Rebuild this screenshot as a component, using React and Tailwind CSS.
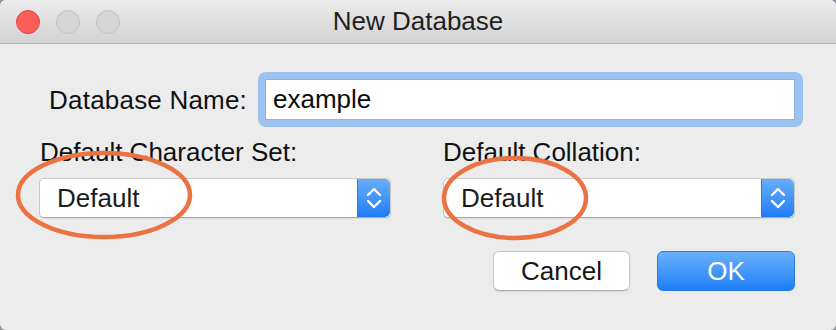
import React from 'react'

function Stepper() {
  return (
    <div className="w-[33px] h-full flex items-center justify-center rounded-r-[5px] bg-gradient-to-b from-[#67adfa] to-[#1c7cf5] border-l border-[#2c7fe6]">
      <svg width="16" height="24" viewBox="0 0 16 24" fill="none" stroke="white" strokeWidth="2.4" strokeLinecap="round" strokeLinejoin="round">
        <path d="M2 9 L8 3 L14 9" />
        <path d="M2 15 L8 21 L14 15" />
      </svg>
    </div>
  )
}

function Select({ value }) {
  return (
    <div className="h-[40px] flex items-stretch bg-white rounded-[5px] border border-[#c9c9c9] border-b-[#a9a9a9] shadow-[0_1px_1px_rgba(0,0,0,0.08)] overflow-hidden">
      <div className="flex-1 flex items-center pl-[17px] text-[26px] text-[#1c1c1c]">{value}</div>
      <Stepper />
    </div>
  )
}

export default function App() {
  return (
    <div className="w-[836px] h-[330px] bg-[#8d929b] font-['Liberation_Sans',Arial,sans-serif]">
      <div className="relative w-full h-full bg-[#ececec] rounded-[6px] overflow-hidden flex flex-col">
        {/* title bar */}
        <div className="h-[44px] shrink-0 grid grid-cols-[1fr_auto_1fr] items-center bg-gradient-to-b from-[#ebebeb] to-[#d3d3d3] border-b border-[#b2b2b2]">
          <div className="flex items-center gap-[16px] pl-[16px]">
            <span className="w-[24px] h-[24px] rounded-full bg-[#fc5f57] border border-[#e0443e]" />
            <span className="w-[24px] h-[24px] rounded-full bg-[#d5d5d5] border border-[#c2c2c2]" />
            <span className="w-[24px] h-[24px] rounded-full bg-[#d5d5d5] border border-[#c2c2c2]" />
          </div>
          <div className="text-[26px] leading-none text-[#1f1f1f] pb-[2px]">New Database</div>
          <div />
        </div>

        {/* body */}
        <div className="flex flex-col pl-[39px] pr-[41px] pt-[28px] text-[26px] text-[#111]">
          <div className="flex items-center">
            <div className="w-[208px] shrink-0 text-right leading-[30px] tracking-[0.2px]">Database Name:</div>
            <div className="ml-[11px] w-[545px] h-[55px] shrink-0 rounded-[8px] bg-[#9dc2ef] p-[7px] pr-[8px]">
              <div className="h-full bg-white border border-[#8fb3e0] flex items-center pl-[7px] text-[26px] text-[#0c0c0c]">
                example
              </div>
            </div>
          </div>

          <div className="grid grid-cols-2 gap-x-[52px] mt-[10px]">
            <div className="flex flex-col">
              <div className="leading-[30px] pl-[1px]">Default Character Set:</div>
              <div className="mt-[11px]">
                <Select value="Default" />
              </div>
            </div>
            <div className="flex flex-col">
              <div className="leading-[30px]">Default Collation:</div>
              <div className="mt-[11px]">
                <Select value="Default" />
              </div>
            </div>
          </div>

          <div className="flex justify-end gap-[27px] mt-[33px]">
            <button className="w-[137px] h-[40px] rounded-[6px] bg-white border border-[#c6c6c6] border-b-[#aeaeae] shadow-[0_1px_1px_rgba(0,0,0,0.08)] text-[26px] text-[#151515] flex items-center justify-center">
              Cancel
            </button>
            <button className="w-[138px] h-[40px] rounded-[6px] bg-gradient-to-b from-[#68b0fb] to-[#1a7ef7] border border-[#2a7de6] text-[26px] text-white flex items-center justify-center">
              OK
            </button>
          </div>
        </div>

        {/* annotation circles */}
        <svg className="absolute inset-0 pointer-events-none" width="836" height="330">
          <ellipse cx="104" cy="195" rx="86" ry="42" fill="none" stroke="#ea7243" strokeWidth="4.5" />
          <ellipse cx="515" cy="198" rx="71" ry="40" fill="none" stroke="#ea7243" strokeWidth="4.5" />
        </svg>
      </div>
    </div>
  )
}
